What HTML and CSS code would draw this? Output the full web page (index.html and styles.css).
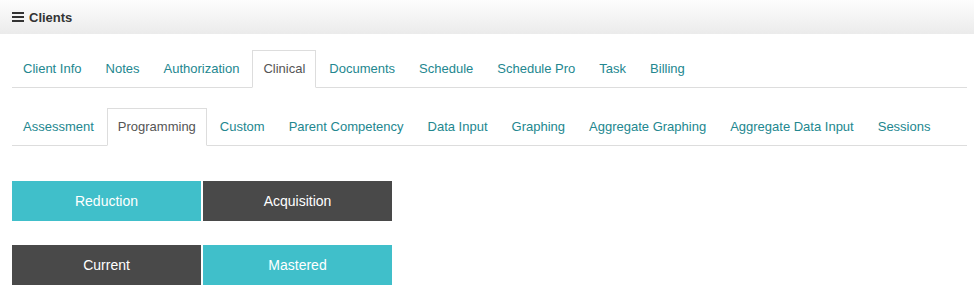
FILE: index.html
```html
<!DOCTYPE html>
<html lang="en">

<head>
    <meta charset="UTF-8">
    <title>Clients</title>
    <link rel="stylesheet" href="styles.css">
</head>

<body>
    <div class="header">
        <svg class="menu-icon" width="12" height="10" viewBox="0 0 12 10">
            <rect x="0" y="0" width="12" height="2" fill="#333"/>
            <rect x="0" y="4" width="12" height="2" fill="#333"/>
            <rect x="0" y="8" width="12" height="2" fill="#333"/>
        </svg>
        <span class="title">Clients</span>
    </div>

    <div class="content">
        <ul class="tabs main-tabs">
            <li><a href="#">Client Info</a></li>
            <li><a href="#">Notes</a></li>
            <li><a href="#">Authorization</a></li>
            <li class="active"><a href="#">Clinical</a></li>
            <li><a href="#">Documents</a></li>
            <li><a href="#">Schedule</a></li>
            <li><a href="#">Schedule Pro</a></li>
            <li><a href="#">Task</a></li>
            <li><a href="#">Billing</a></li>
        </ul>

        <ul class="tabs sub-tabs">
            <li><a href="#">Assessment</a></li>
            <li class="active"><a href="#">Programming</a></li>
            <li><a href="#">Custom</a></li>
            <li><a href="#">Parent Competency</a></li>
            <li><a href="#">Data Input</a></li>
            <li><a href="#">Graphing</a></li>
            <li><a href="#">Aggregate Graphing</a></li>
            <li><a href="#">Aggregate Data Input</a></li>
            <li><a href="#">Sessions</a></li>
        </ul>

        <div class="toggle-row">
            <button class="toggle on">Reduction</button>
            <button class="toggle off">Acquisition</button>
        </div>

        <div class="toggle-row">
            <button class="toggle off">Current</button>
            <button class="toggle on">Mastered</button>
        </div>
    </div>
</body>

</html>
```

FILE: styles.css
```css
* {
    box-sizing: border-box;
    margin: 0;
    padding: 0;
}

body {
    font-family: "Liberation Sans", Arial, sans-serif;
    font-size: 13px;
    color: #333;
    background: #fff;
}

.header {
    height: 34px;
    display: flex;
    align-items: center;
    gap: 5px;
    padding: 0 12px;
    background: linear-gradient(to bottom, #fdfdfd, #ebebeb);
}

.title {
    font-weight: bold;
    font-size: 13px;
    color: #333;
}

.content {
    padding: 16px 7px 0 12px;
}

.tabs {
    list-style: none;
    display: flex;
    border-bottom: 1px solid #ddd;
}

.tabs li {
    margin-right: 2px;
    margin-bottom: -1px;
}

.tabs a {
    display: block;
    padding: 9px 10px;
    line-height: 18px;
    border: 1px solid transparent;
    color: #23878f;
    text-decoration: none;
}

.tabs .active a {
    color: #555;
    background: #fff;
    border-color: #ddd #ddd transparent #ddd;
}

.sub-tabs {
    margin-top: 20px;
}

.toggle-row {
    display: flex;
    gap: 2px;
    margin-top: 24px;
}

.sub-tabs + .toggle-row {
    margin-top: 35px;
}

.toggle {
    width: 189px;
    height: 40px;
    border: none;
    font-family: "Liberation Sans", Arial, sans-serif;
    font-size: 14px;
    color: #fff;
    cursor: pointer;
}

.toggle.on {
    background: #40bfca;
}

.toggle.off {
    background: #494949;
}
```
